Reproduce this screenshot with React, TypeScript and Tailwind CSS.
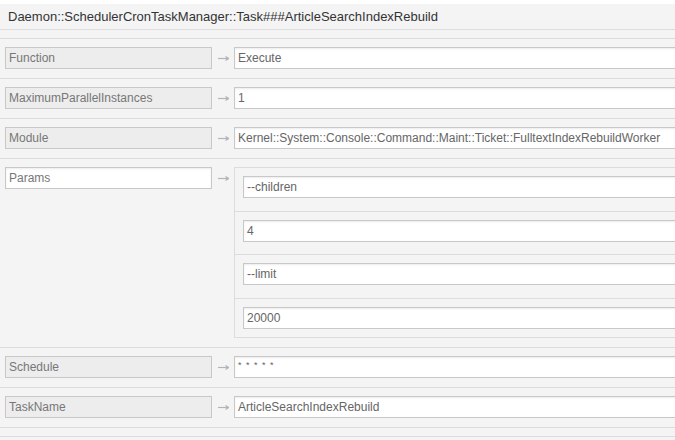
import React from "react";

const rows = [
  { label: "Function", value: "Execute" },
  { label: "MaximumParallelInstances", value: "1" },
  { label: "Module", value: "Kernel::System::Console::Command::Maint::Ticket::FulltextIndexRebuildWorker" },
];

const params = ["--children", "4", "--limit", "20000"];
const paramPad = ["pb-[13px] border-b", "pb-[12px] border-b", "pb-[13px] border-b", "pb-2"];

function Arrow() {
  return (
    <div className="w-[22px] h-[22px] flex items-center justify-center shrink-0">
      <svg width="11" height="5" viewBox="0 0 11 5">
        <path d="M0 2.5 H10" stroke="#b4b4b4" strokeWidth="1.2" />
        <path d="M7.5 0.5 L10.5 2.5 L7.5 4.5" fill="none" stroke="#b4b4b4" strokeWidth="1.2" />
      </svg>
    </div>
  );
}

function Label({ text, white }: { text: string; white?: boolean }) {
  return (
    <div
      className={`w-[207px] h-[22px] shrink-0 border border-[#c8c8c8] px-[3px] flex items-center text-[12px] text-[#777] ${
        white ? "bg-white shadow-[inset_0_1px_2px_rgba(0,0,0,0.08)]" : "bg-[#ededed]"
      }`}
    >
      {text}
    </div>
  );
}

function Input({ value, small }: { value: string; small?: boolean }) {
  return (
    <div className="w-[600px] h-[22px] shrink-0 border border-[#c8c8c8] bg-white shadow-[inset_0_1px_2px_rgba(0,0,0,0.08)] px-[3px] flex items-center text-[12px] text-[#666]">
      <span className={small ? "text-[9px] tracking-[1px] -mt-[3px]" : ""}>{value}</span>
    </div>
  );
}

function Row({ label, value }: { label: string; value: string }) {
  return (
    <div className="flex items-start pl-[5px] pt-2 pb-[9px] border-b border-[#dcdcdc]">
      <Label text={label} />
      <Arrow />
      <Input value={value} small={value === "* * * * *"} />
    </div>
  );
}

export default function App() {
  return (
    <div
      className="w-[675px] h-[440px] overflow-hidden bg-[#f4f4f4]"
      style={{ fontFamily: '"Liberation Sans", Arial, sans-serif' }}
    >
      <div className="h-[4px] bg-white" />

      {/* Header */}
      <div className="h-[26px] flex items-center pl-[8px] text-[13px] text-[#333] border-b border-[#dcdcdc]">
        Daemon::SchedulerCronTaskManager::Task###ArticleSearchIndexRebuild
      </div>
      <div className="h-[8px]" />

      {/* Settings */}
      <div className="border-t border-[#dcdcdc]">
        {rows.map((r) => (
          <Row key={r.label} label={r.label} value={r.value} />
        ))}

        {/* Params */}
        <div className="flex items-start pl-[5px] pt-2 pb-[9px] border-b border-[#dcdcdc]">
          <Label text="Params" white />
          <Arrow />
          <div className="w-[600px] shrink-0 border border-[#dcdcdc]">
            {params.map((p, i) => (
              <div key={p} className={`pl-2 pt-2 border-[#dcdcdc] ${paramPad[i]}`}>
                <Input value={p} />
              </div>
            ))}
          </div>
        </div>

        <Row label="Schedule" value="* * * * *" />
        <Row label="TaskName" value="ArticleSearchIndexRebuild" />
      </div>
      <div className="h-[9px] border-b border-[#dcdcdc]" />
    </div>
  );
}
